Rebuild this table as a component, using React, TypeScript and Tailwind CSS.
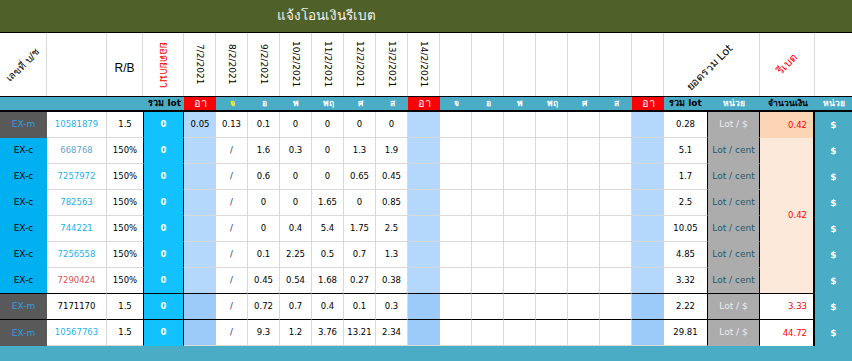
const COLS = "grid-cols-[47px_60px_36px_41px_repeat(15,32px)_43px_53px_55px_37px]";

const dates = ["7/2/2021", "8/2/2021", "9/2/2021", "10/2/2021", "11/2/2021", "12/2/2021", "13/2/2021", "14/2/2021"];
const days = ["อา", "จ", "อ", "พ", "พฤ", "ศ", "ส", "อา", "จ", "อ", "พ", "พฤ", "ศ", "ส", "อา"];
const sunday = [0, 7, 14];

type Row = {
  name: "EX-m" | "EX-c";
  acct: string;
  acctColor: string;
  rb: string;
  days: string[];
  total: string;
  money?: string;
};

const rows: Row[] = [
  { name: "EX-m", acct: "10581879", acctColor: "text-[#22b2ef]", rb: "1.5", days: ["0.05", "0.13", "0.1", "0", "0", "0", "0"], total: "0.28", money: "0.42" },
  { name: "EX-c", acct: "668768", acctColor: "text-[#5fa6cb]", rb: "150%", days: ["", "/", "1.6", "0.3", "0", "1.3", "1.9"], total: "5.1", money: "0.42" },
  { name: "EX-c", acct: "7257972", acctColor: "text-[#22b2ef]", rb: "150%", days: ["", "/", "0.6", "0", "0", "0.65", "0.45"], total: "1.7" },
  { name: "EX-c", acct: "782563", acctColor: "text-[#22b2ef]", rb: "150%", days: ["", "/", "0", "0", "1.65", "0", "0.85"], total: "2.5" },
  { name: "EX-c", acct: "744221", acctColor: "text-[#22b2ef]", rb: "150%", days: ["", "/", "0", "0.4", "5.4", "1.75", "2.5"], total: "10.05" },
  { name: "EX-c", acct: "7256558", acctColor: "text-[#22b2ef]", rb: "150%", days: ["", "/", "0.1", "2.25", "0.5", "0.7", "1.3"], total: "4.85" },
  { name: "EX-c", acct: "7290424", acctColor: "text-[#d9505a]", rb: "150%", days: ["", "/", "0.45", "0.54", "1.68", "0.27", "0.38"], total: "3.32" },
  { name: "EX-m", acct: "7171170", acctColor: "text-black", rb: "1.5", days: ["", "/", "0.72", "0.7", "0.4", "0.1", "0.3"], total: "2.22", money: "3.33" },
  { name: "EX-m", acct: "10567763", acctColor: "text-[#22b2ef]", rb: "1.5", days: ["", "/", "9.3", "1.2", "3.76", "13.21", "2.34"], total: "29.81", money: "44.72" },
];

function DataRow({ row, index }: { row: Row; index: number }) {
  const thick = index === 6 || index === 7;
  const bb = thick ? "border-b border-b-black" : "border-b border-b-[#d9d9d9]";
  const blue = index >= 7 ? "bg-[#9ccbfa]" : "bg-[#b4d8fc]";
  const dayCells = Array.from({ length: 15 }, (_, i) => {
    const v = i < 7 ? row.days[i] : "";
    const isSun = sunday.includes(i);
    return (
      <div
        key={i}
        className={`flex items-center justify-center ${bb} ${isSun ? blue : "bg-white border-r border-r-[#d9d9d9]"} ${v === "/" ? "text-[#1f3070]" : "text-black"}`}
      >
        {v}
      </div>
    );
  });

  return (
    <>
      <div
        className={`flex items-center justify-center text-[9px] ${row.name === "EX-m" ? "bg-[#595959] text-[#2f9ee0]" : "bg-[#00b0f0] text-black"} ${thick ? "border-b border-b-black" : index === 8 ? "" : row.name === "EX-m" ? "border-b border-b-[#595959]" : "border-b border-b-[#00b0f0]"}`}
      >
        {row.name}
      </div>
      <div className={`flex items-center justify-center bg-white border-r border-r-[#d9d9d9] ${bb} ${row.acctColor}`}>{row.acct}</div>
      <div className={`flex items-center justify-center bg-white ${bb}`}>{row.rb}</div>
      <div className={`flex items-center justify-center bg-[#12c1fd] border-x border-x-black ${thick ? "border-b border-b-black" : "border-b border-b-[#12c1fd]"} font-bold text-white`}>0</div>
      {dayCells}
      <div className={`flex items-center justify-center bg-white ${bb}`}>{row.total}</div>
      <div
        className={`flex items-center justify-center text-[9px] bg-[#acacac] border-x border-x-black ${thick ? "border-b border-b-black" : "border-b border-b-[#acacac]"} ${row.name === "EX-m" ? "text-[#ececec]" : "text-[#215a6e]"}`}
      >
        {row.name === "EX-m" ? "Lot / $" : "Lot / cent"}
      </div>
      {index === 0 && (
        <div className="flex items-center justify-end bg-[#fcd5b4] border-r-2 border-r-black pr-[6px] text-[#ff0000]">0.42</div>
      )}
      {index === 1 && (
        <div className="row-span-6 flex items-center justify-end bg-[#fde9d9] border-r-2 border-r-black border-b border-b-black pr-[6px] text-[#ff0000]">
          0.42
        </div>
      )}
      {index >= 7 && (
        <div className={`flex items-center justify-end bg-white border-r-2 border-r-black ${index === 7 ? "border-b border-b-black" : ""} pr-[6px] text-[#ff0000]`}>
          {row.money}
        </div>
      )}
      <div className="flex items-center justify-center bg-[#4bacc6] text-[9px] font-bold text-white">$</div>
    </>
  );
}

export default function App() {
  return (
    <div className="w-[852px] h-[361px] overflow-hidden bg-[#4bacc6] font-['DejaVu_Sans',sans-serif] text-[8.5px] leading-none">
      {/* title */}
      <div className="h-[33px] bg-[#4f6128] border-b border-black flex items-center pl-[277px]">
        <span className="text-[13.5px] text-[#f2f2f2]">แจ้งโอนเงินรีเบต</span>
      </div>

      {/* rotated header row */}
      <div className={`grid ${COLS} h-[64px] bg-white border-b border-black`}>
        <div className="flex items-center justify-center border-r border-[#d9d9d9]">
          <span className="-rotate-45 whitespace-nowrap text-[10px] text-black">เลขที่ บ/ช</span>
        </div>
        <div className="border-r border-[#d9d9d9]" />
        <div className="flex items-center justify-center border-r border-[#d9d9d9] pt-[6px] font-['Liberation_Sans',sans-serif] text-[12px] text-black">
          R/B
        </div>
        <div className="flex items-center justify-center border-r border-[#d9d9d9]">
          <span className="[writing-mode:vertical-rl] text-[11px] text-[#ff0000]">ยอดยกมา</span>
        </div>
        {Array.from({ length: 15 }, (_, i) => (
          <div key={i} className="flex items-center justify-center border-r border-[#d9d9d9]">
            {i < dates.length && <span className="[writing-mode:vertical-rl] text-[9px] text-black">{dates[i]}</span>}
          </div>
        ))}
        <div className="col-span-2 flex items-center justify-center border-r border-[#d9d9d9] pt-[6px] pr-[4px]">
          <span className="-rotate-45 whitespace-nowrap text-[11px] text-black">ยอดรวม Lot</span>
        </div>
        <div className="flex items-center justify-center border-r border-[#d9d9d9]">
          <span className="-rotate-45 whitespace-nowrap text-[11px] text-[#ff0000]">รีเบต</span>
        </div>
        <div />
      </div>

      {/* day row */}
      <div className={`grid ${COLS} h-[15px] bg-[#4bacc6] border-b-2 border-black font-bold`}>
        <div className="col-span-4 flex items-center justify-end pr-[3px] text-[9px] text-black">รวม lot</div>
        {days.map((d, i) => (
          <div
            key={i}
            className={`flex items-center justify-center ${sunday.includes(i) ? "bg-[#ff0000] text-[11px] font-normal text-white" : i === 1 ? "text-[#ffff00]" : "text-white"}`}
          >
            {d}
          </div>
        ))}
        <div className="flex items-center justify-center text-[9px] text-black">รวม lot</div>
        <div className="flex items-center justify-center text-white">หน่วย</div>
        <div className="flex items-center justify-center text-black">จำนวนเงิน</div>
        <div className="flex items-center justify-center text-white">หน่วย</div>
      </div>

      {/* data rows */}
      <div className={`grid ${COLS} auto-rows-[26px]`}>
        {rows.map((r, i) => (
          <DataRow key={i} row={r} index={i} />
        ))}
      </div>
    </div>
  );
}
